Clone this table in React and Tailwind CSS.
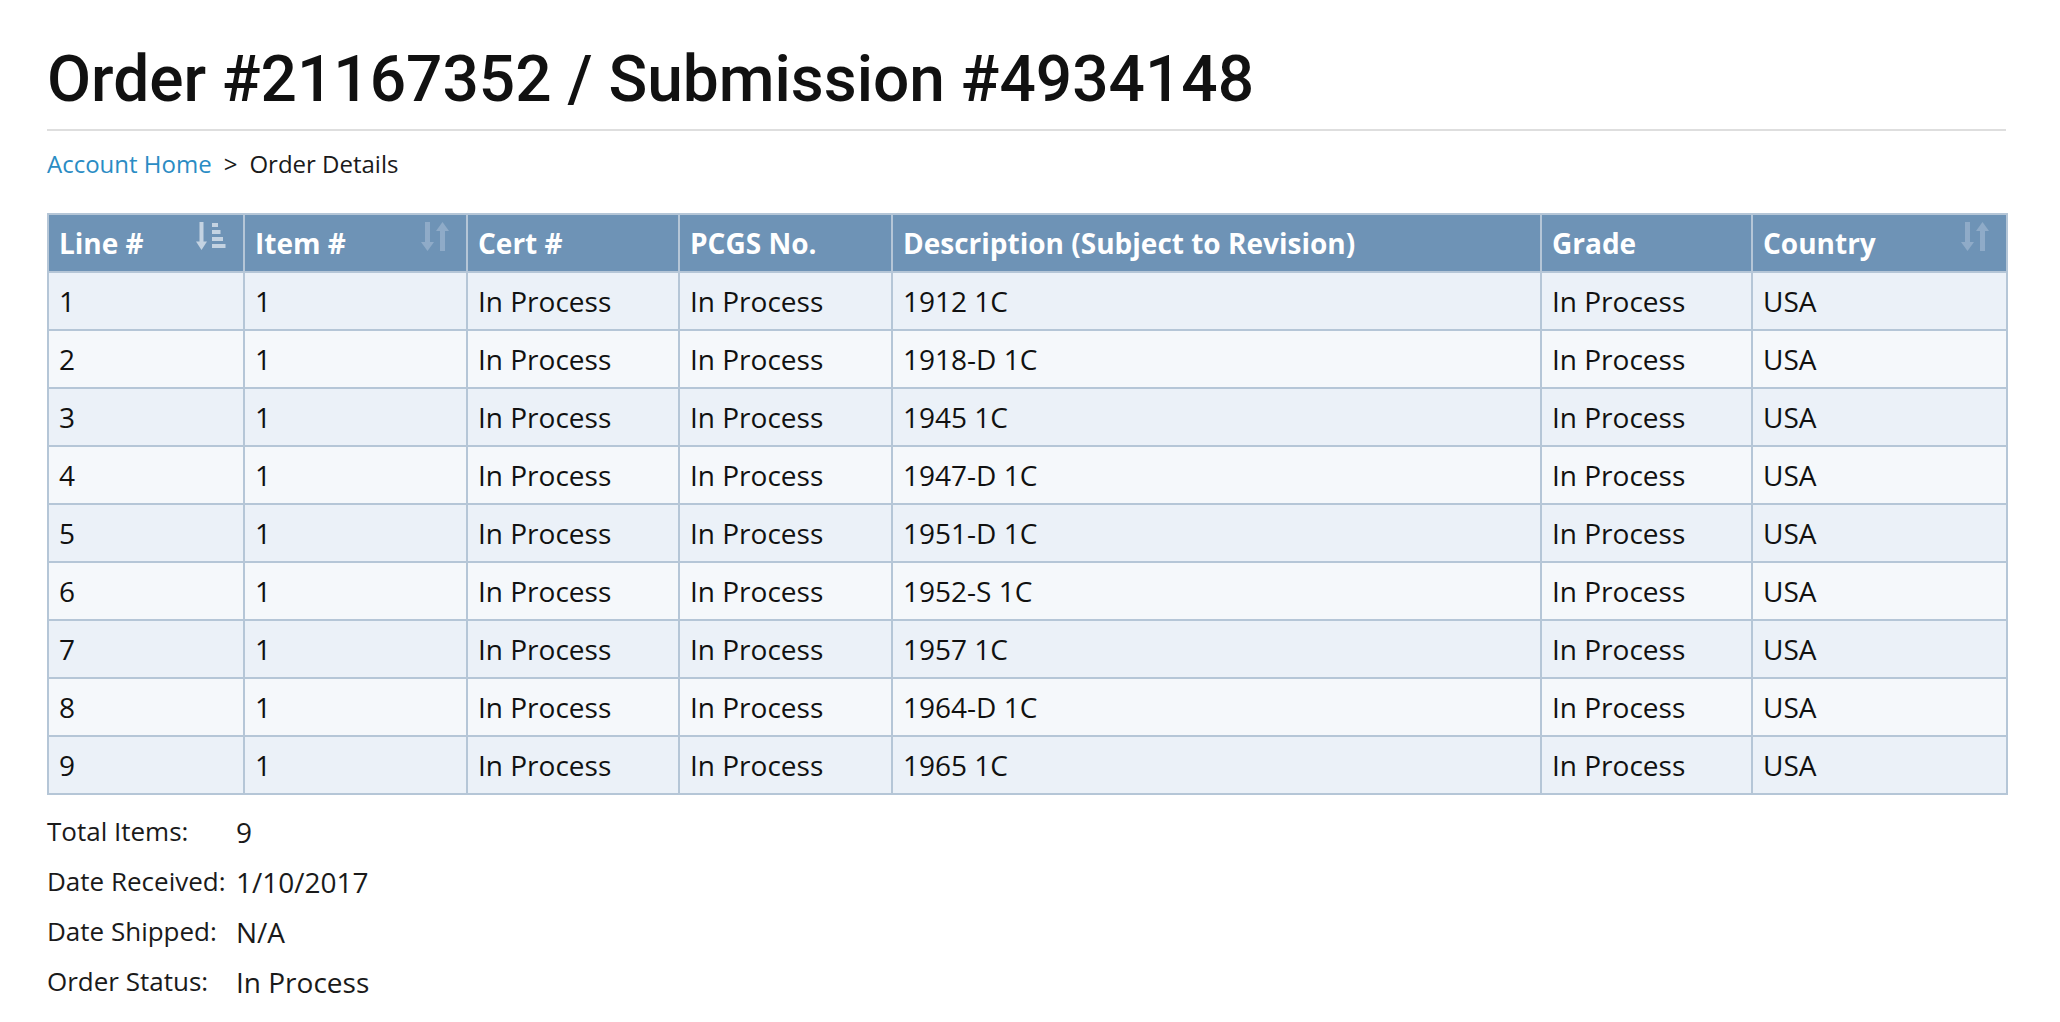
import React from "react";

const rows = [
  ["1", "1", "In Process", "In Process", "1912 1C", "In Process", "USA"],
  ["2", "1", "In Process", "In Process", "1918-D 1C", "In Process", "USA"],
  ["3", "1", "In Process", "In Process", "1945 1C", "In Process", "USA"],
  ["4", "1", "In Process", "In Process", "1947-D 1C", "In Process", "USA"],
  ["5", "1", "In Process", "In Process", "1951-D 1C", "In Process", "USA"],
  ["6", "1", "In Process", "In Process", "1952-S 1C", "In Process", "USA"],
  ["7", "1", "In Process", "In Process", "1957 1C", "In Process", "USA"],
  ["8", "1", "In Process", "In Process", "1964-D 1C", "In Process", "USA"],
  ["9", "1", "In Process", "In Process", "1965 1C", "In Process", "USA"],
];

// active sort (ascending)
const SortAsc = () => (
  <svg width="30" height="29" viewBox="0 0 30 29" fill="#c4d3e2">
    <rect x="3.5" y="0" width="4" height="21" />
    <path d="M0 19.5h11l-5.5 8.5z" />
    <rect x="16" y="1" width="6" height="4" />
    <rect x="16" y="8" width="8.5" height="4" />
    <rect x="16" y="15" width="11" height="4" />
    <rect x="16" y="22" width="13.5" height="4" />
  </svg>
);

const SortBoth = () => (
  <svg width="28" height="29" viewBox="0 0 28 29" fill="#8fabc8">
    <rect x="4" y="0" width="5" height="21" />
    <path d="M0 20h13l-6.5 9z" />
    <rect x="19" y="8" width="5" height="21" />
    <path d="M15 9h13l-6.5-9z" />
  </svg>
);

const headers = [
  { label: "Line #", w: "w-[196px]", icon: <SortAsc /> },
  { label: "Item #", w: "w-[223px]", icon: <SortBoth /> },
  { label: "Cert #", w: "w-[212px]" },
  { label: "PCGS No.", w: "w-[213px]" },
  { label: "Description (Subject to Revision)", w: "w-[649px]" },
  { label: "Grade", w: "w-[211px]" },
  { label: "Country", w: "w-[255px]", icon: <SortBoth /> },
];

const info = [
  ["Total Items:", "9"],
  ["Date Received:", "1/10/2017"],
  ["Date Shipped:", "N/A"],
  ["Order Status:", "In Process"],
];

export default function App() {
  return (
    <div className="min-h-screen bg-white px-[47px] pt-[42px] font-['Open_Sans',sans-serif] text-[#1a1a1a]">
      <h1 className="font-['Roboto',sans-serif] text-[64px] font-medium leading-[1.2] text-[#111]">
        Order #21167352 / Submission #4934148
      </h1>
      <div className="mt-[10px] h-[2px] w-[1959px] bg-[#dedede]" />
      <div className="mt-[17px] text-[24px] leading-[32px]">
        <span className="text-[#2a8cc4]">Account Home</span>
        <span className="mx-[12px]">&gt;</span>
        <span>Order Details</span>
      </div>
      <table className="mt-[33px] w-[1959px] table-fixed border-collapse border-2 border-[#b5c6d7]">
        <thead>
          <tr className="bg-[#6e93b6] text-white">
            {headers.map((h) => (
              <th
                key={h.label}
                className={`${h.w} h-[58px] border-2 border-[#b5c6d7] px-[10px] text-left text-[28px] font-bold`}
              >
                <div className="flex items-center justify-between">
                  <span>{h.label}</span>
                  {h.icon && <span className="mr-[7px] -translate-y-[6px]">{h.icon}</span>}
                </div>
              </th>
            ))}
          </tr>
        </thead>
        <tbody>
          {rows.map((r, i) => (
            <tr key={i} className={i % 2 === 0 ? "bg-[#ebf1f8]" : "bg-[#f5f8fb]"}>
              {r.map((c, j) => (
                <td key={j} className="h-[58px] border-2 border-[#b5c6d7] px-[10px] text-[28px] text-[#111]">
                  {c}
                </td>
              ))}
            </tr>
          ))}
        </tbody>
      </table>
      <div className="mt-[12px] flex flex-col">
        {info.map(([k, v]) => (
          <div key={k} className="flex h-[50px] items-center">
            <span className="w-[189px] text-[26px]">{k}</span>
            <span className="text-[28px]">{v}</span>
          </div>
        ))}
      </div>
    </div>
  );
}
